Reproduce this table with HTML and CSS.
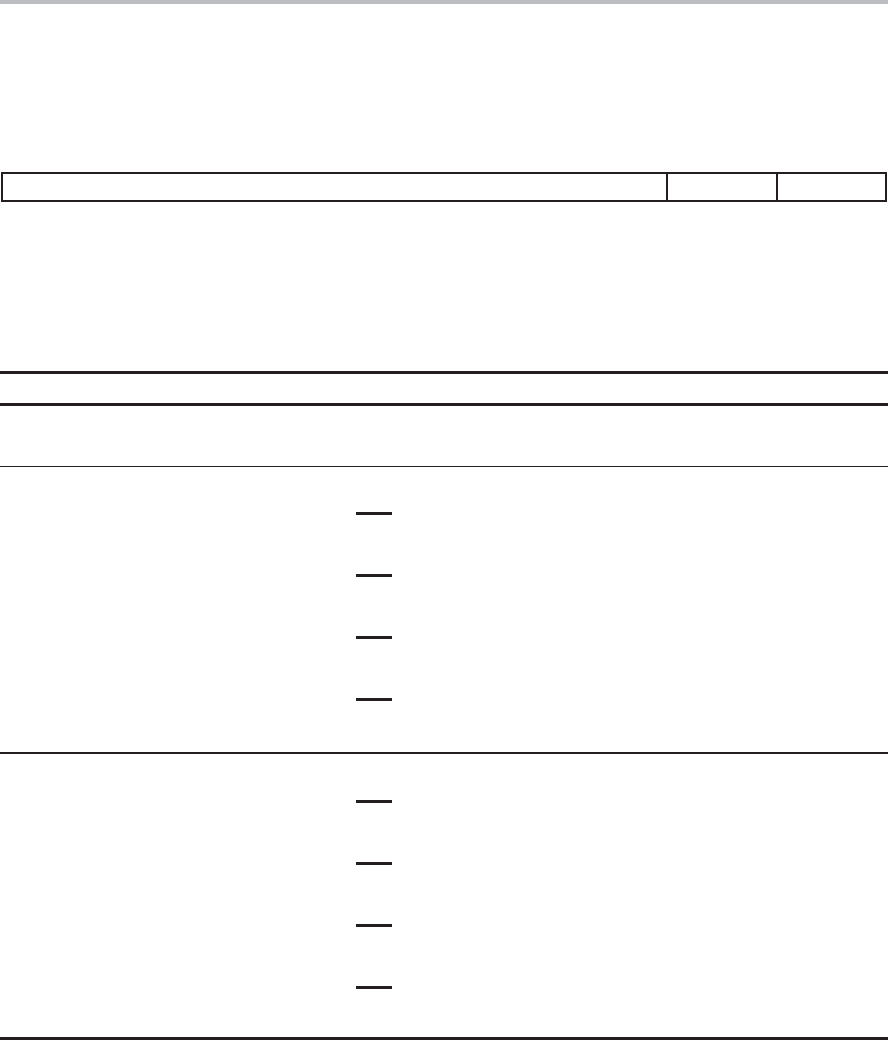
FILE: index.html
```html
<!DOCTYPE html>
<html>
<head>
<meta charset="utf-8">
<link rel="stylesheet" href="styles.css">
</head>
<body>
<div class="topbar"></div>
<div class="box">
  <div class="cell"></div>
  <div class="cell"></div>
  <div class="cell"></div>
</div>
<div class="table">
  <div class="head"></div>
  <div class="subhead"></div>
  <div class="group first">
    <div class="dash"></div>
    <div class="dash"></div>
    <div class="dash"></div>
    <div class="dash"></div>
  </div>
  <div class="group second">
    <div class="dash"></div>
    <div class="dash"></div>
    <div class="dash"></div>
    <div class="dash"></div>
  </div>
</div>
</body>
</html>
```
FILE: styles.css
```css
html, body {
  margin: 0;
  padding: 0;
  background: #fff;
  font-family: "Liberation Sans", Arial, sans-serif;
}
.topbar {
  height: 4px;
  background: #bcbdc0;
}
.box {
  margin: 168px 0 0 1px;
  width: 886px;
  height: 30px;
  box-sizing: border-box;
  border: 2px solid #231f20;
  display: grid;
  grid-template-columns: 663px 110px 1fr;
}
.cell + .cell {
  border-left: 2px solid #231f20;
}
.table {
  margin-top: 169px;
  border-top: 3px solid #231f20;
}
.head {
  height: 29px;
  border-bottom: 3px solid #231f20;
}
.subhead {
  height: 60px;
  border-bottom: 1px solid #231f20;
}
.group {
  display: flex;
  flex-direction: column;
  gap: 59px;
}
.group.first {
  padding: 45px 0 51px;
  border-bottom: 2px solid #231f20;
}
.group.second {
  padding: 46px 0 48px;
  border-bottom: 3px solid #231f20;
}
.dash {
  width: 36px;
  height: 3px;
  margin-left: 356px;
  background: #231f20;
}
```
